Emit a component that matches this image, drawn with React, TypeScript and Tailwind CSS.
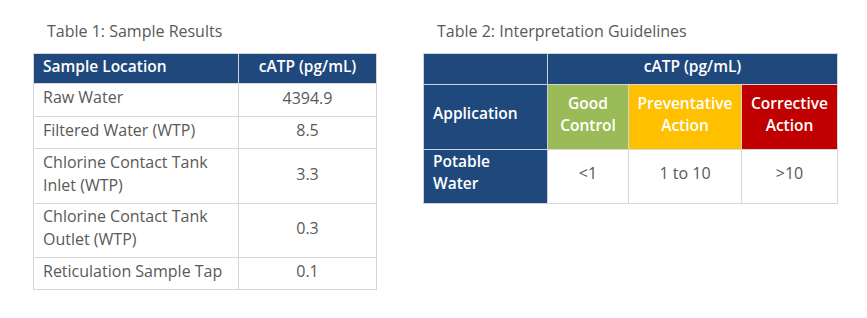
const navy = "bg-[#1f497d]";

function Caption({ text }: { text: string }) {
  return (
    <div className="pl-[14px] h-[20px] leading-[20px] text-[16px] text-[#595959]">
      {text}
    </div>
  );
}

const samples: { location: string[]; value: string; h: string }[] = [
  { location: ["Raw Water"], value: "4394.9", h: "h-[33px]" },
  { location: ["Filtered Water (WTP)"], value: "8.5", h: "h-[32px]" },
  { location: ["Chlorine Contact Tank", "Inlet (WTP)"], value: "3.3", h: "h-[55px]" },
  { location: ["Chlorine Contact Tank", "Outlet (WTP)"], value: "0.3", h: "h-[54px]" },
  { location: ["Reticulation Sample Tap"], value: "0.1", h: "h-[32px]" },
];

function SampleTable() {
  return (
    <div className="w-[343px]">
      <Caption text="Table 1: Sample Results" />
      <table className="mt-[12px] w-[343px] table-fixed border-collapse text-[16px]">
        <colgroup>
          <col className="w-[205px]" />
          <col className="w-[138px]" />
        </colgroup>
        <thead>
          <tr className="h-[30px] text-[15.5px]">
            <th className={`${navy} border border-[#d6d6d6] px-[9px] pb-[4px] text-left font-semibold text-white`}>
              Sample Location
            </th>
            <th className={`${navy} border border-[#d6d6d6] pb-[4px] text-center font-semibold text-white`}>
              cATP (pg/mL)
            </th>
          </tr>
        </thead>
        <tbody className="text-[#595959]">
          {samples.map((s) => (
            <tr key={s.location.join(" ")} className={s.h}>
              <td className="border border-[#d6d6d6] px-[9px] pb-[5px] leading-[23px] align-middle">
                {s.location.map((l) => (
                  <div key={l}>{l}</div>
                ))}
              </td>
              <td className="border border-[#d6d6d6] pb-[5px] text-center align-middle">{s.value}</td>
            </tr>
          ))}
        </tbody>
      </table>
    </div>
  );
}

function GuideTable() {
  const cell = "border border-[#d6d6d6] pb-[7px] text-center align-middle leading-[22px]";
  return (
    <div className="w-[414px]">
      <Caption text="Table 2: Interpretation Guidelines" />
      <table className="mt-[12px] w-[414px] table-fixed border-collapse text-[15.5px]">
        <colgroup>
          <col className="w-[124px]" />
          <col className="w-[81px]" />
          <col className="w-[113px]" />
          <col className="w-[96px]" />
        </colgroup>
        <tbody>
          <tr className="h-[31px]">
            <td className={`${navy} border border-[#c9d3e0]`}></td>
            <td colSpan={3} className={`${navy} ${cell} font-semibold text-white`}>
              cATP (pg/mL)
            </td>
          </tr>
          <tr className="h-[65px]">
            <td className={`${navy} border border-[#c9d3e0] px-[9px] pb-[6px] font-semibold text-white`}>
              Application
            </td>
            <td className={`${cell} bg-[#9bbb59] font-semibold text-white`}>
              <div>Good</div>
              <div>Control</div>
            </td>
            <td className={`${cell} bg-[#ffc000] font-semibold text-white`}>
              <div>Preventative</div>
              <div>Action</div>
            </td>
            <td className={`${cell} bg-[#c00000] font-semibold text-white`}>
              <div>Corrective</div>
              <div>Action</div>
            </td>
          </tr>
          <tr className="h-[54px] text-[#595959] text-[16px]">
            <td className={`${navy} border border-[#c9d3e0] px-[9px] align-top leading-[22px] text-[15.5px] font-semibold text-white`}>
              <div>Potable</div>
              <div>Water</div>
            </td>
            <td className={cell}>&lt;1</td>
            <td className={cell}>1 to 10</td>
            <td className={cell}>&gt;10</td>
          </tr>
        </tbody>
      </table>
    </div>
  );
}

export default function App() {
  return (
    <div className="w-[867px] h-[318px] bg-white font-['Open_Sans',sans-serif]">
      <div className="flex gap-[47px] pl-[33px] pt-[21px]">
        <SampleTable />
        <GuideTable />
      </div>
    </div>
  );
}
